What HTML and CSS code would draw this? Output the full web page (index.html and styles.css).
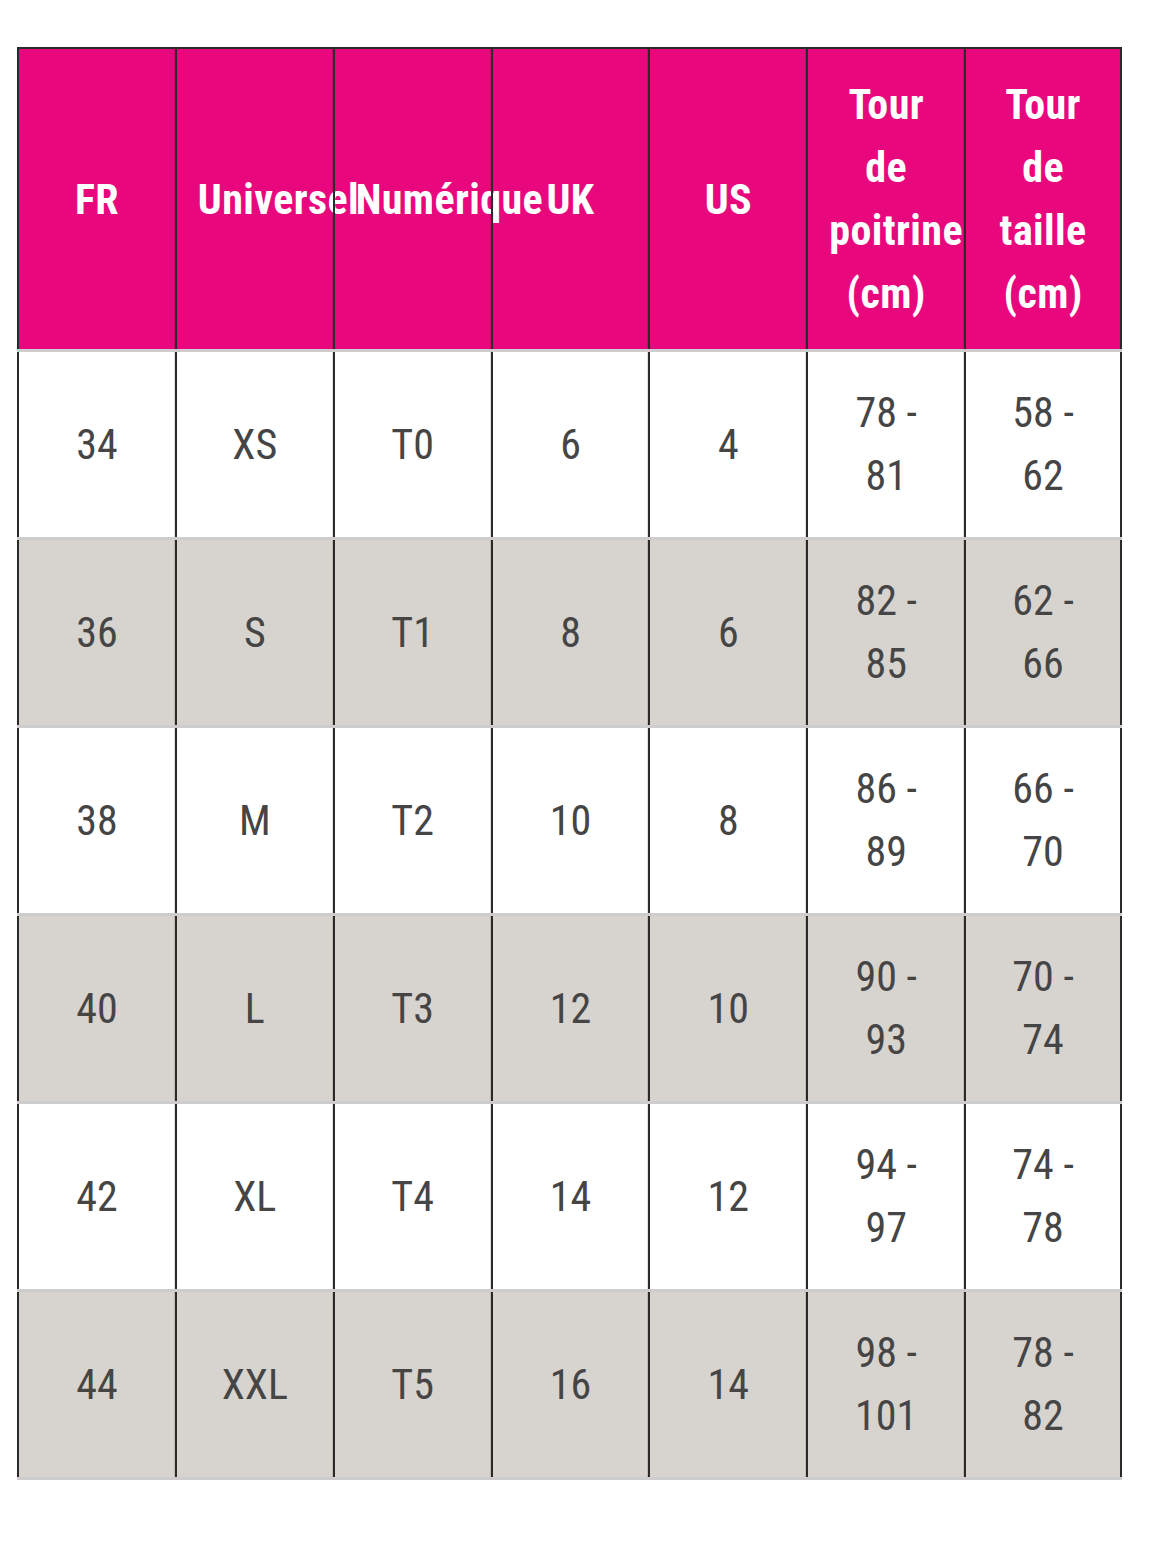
FILE: index.html
```html
<!DOCTYPE html>
<html lang="fr">
<head>
<meta charset="utf-8">
<title>Guide des tailles</title>
<link rel="stylesheet" href="styles.css">
</head>
<body>
<div class="size-table">
  <div class="row head">
    <div class="cell"><div class="txt">FR</div></div>
    <div class="cell"><div class="txt">Universel</div></div>
    <div class="cell"><div class="txt">Numérique</div></div>
    <div class="cell"><div class="txt">UK</div></div>
    <div class="cell"><div class="txt">US</div></div>
    <div class="cell"><div class="txt">Tour de poitrine (cm)</div></div>
    <div class="cell"><div class="txt">Tour de taille (cm)</div></div>
  </div>
  <div class="row">
    <div class="cell"><div class="txt">34</div></div>
    <div class="cell"><div class="txt">XS</div></div>
    <div class="cell"><div class="txt">T0</div></div>
    <div class="cell"><div class="txt">6</div></div>
    <div class="cell"><div class="txt">4</div></div>
    <div class="cell"><div class="txt">78 - 81</div></div>
    <div class="cell"><div class="txt">58 - 62</div></div>
  </div>
  <div class="row alt">
    <div class="cell"><div class="txt">36</div></div>
    <div class="cell"><div class="txt">S</div></div>
    <div class="cell"><div class="txt">T1</div></div>
    <div class="cell"><div class="txt">8</div></div>
    <div class="cell"><div class="txt">6</div></div>
    <div class="cell"><div class="txt">82 - 85</div></div>
    <div class="cell"><div class="txt">62 - 66</div></div>
  </div>
  <div class="row">
    <div class="cell"><div class="txt">38</div></div>
    <div class="cell"><div class="txt">M</div></div>
    <div class="cell"><div class="txt">T2</div></div>
    <div class="cell"><div class="txt">10</div></div>
    <div class="cell"><div class="txt">8</div></div>
    <div class="cell"><div class="txt">86 - 89</div></div>
    <div class="cell"><div class="txt">66 - 70</div></div>
  </div>
  <div class="row alt">
    <div class="cell"><div class="txt">40</div></div>
    <div class="cell"><div class="txt">L</div></div>
    <div class="cell"><div class="txt">T3</div></div>
    <div class="cell"><div class="txt">12</div></div>
    <div class="cell"><div class="txt">10</div></div>
    <div class="cell"><div class="txt">90 - 93</div></div>
    <div class="cell"><div class="txt">70 - 74</div></div>
  </div>
  <div class="row">
    <div class="cell"><div class="txt">42</div></div>
    <div class="cell"><div class="txt">XL</div></div>
    <div class="cell"><div class="txt">T4</div></div>
    <div class="cell"><div class="txt">14</div></div>
    <div class="cell"><div class="txt">12</div></div>
    <div class="cell"><div class="txt">94 - 97</div></div>
    <div class="cell"><div class="txt">74 - 78</div></div>
  </div>
  <div class="row alt">
    <div class="cell"><div class="txt">44</div></div>
    <div class="cell"><div class="txt">XXL</div></div>
    <div class="cell"><div class="txt">T5</div></div>
    <div class="cell"><div class="txt">16</div></div>
    <div class="cell"><div class="txt">14</div></div>
    <div class="cell"><div class="txt">98 - 101</div></div>
    <div class="cell"><div class="txt">78 - 82</div></div>
  </div>
</div>
</body>
</html>
```
FILE: styles.css
```css
html, body {
  margin: 0;
  padding: 0;
  background: #ffffff;
}

body {
  padding: 47px 0 0 17px;
}

.size-table {
  width: 1105px;
  border-top: 2px solid #2a2a2a;
  font-family: "Roboto Condensed", Roboto, "Liberation Sans Narrow", sans-serif;
  font-stretch: condensed;
  font-size: 42px;
  line-height: 63px;
  color: #454545;
}

.row {
  display: grid;
  grid-template-columns: repeat(7, minmax(0, 1fr));
  border-bottom: 3px solid #cdcdcd;
  background: #ffffff;
}

.row.alt {
  background: #d7d3ce;
}

.row.head {
  background: #e9077e;
  color: #ffffff;
  font-weight: 700;
  letter-spacing: 0.4px;
}

.cell {
  min-width: 0;
  display: flex;
  flex-direction: column;
  justify-content: center;
  border-left: 2px solid #2a2a2a;
  box-shadow: inset -1px 0 0 rgba(0, 0, 0, 0.12);
  padding: 29px 24px 30px;
  text-align: center;
  height: 185px;
  box-sizing: border-box;
}

.cell:last-child {
  border-right: 2px solid #2a2a2a;
  box-shadow: none;
}

.head .cell {
  height: 300px;
  padding: 24px 21px;
}

.txt {
  white-space: normal;
}
```
